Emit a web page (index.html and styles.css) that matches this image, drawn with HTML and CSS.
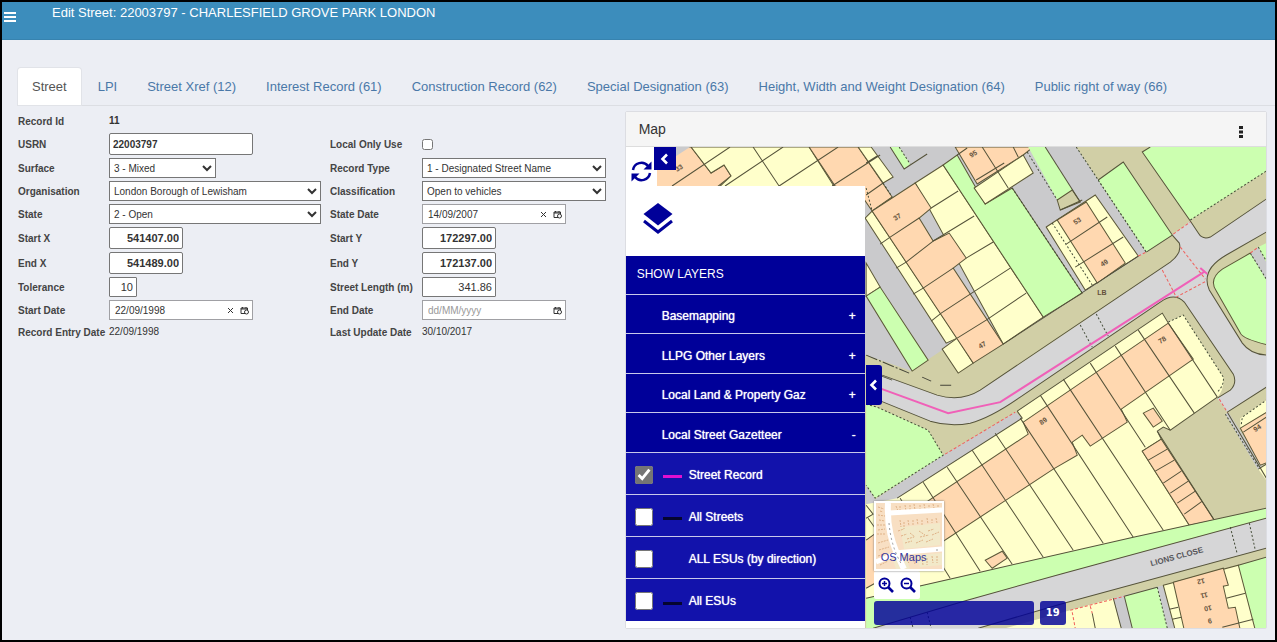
FILE: index.html
```html
<!DOCTYPE html>
<html lang="en">
<head>
<meta charset="utf-8">
<title>Edit Street</title>
<link rel="stylesheet" href="styles.css">
</head>
<body>
<div class="app">
  <header class="topbar">
    <button class="menu-btn" aria-label="Menu"><svg width="12" height="10" viewBox="0 0 12 10"><path d="M0 1h12M0 5h12M0 9h12" stroke="#fff" stroke-width="2"/></svg></button>
    <h1 class="title">Edit Street: 22003797 - CHARLESFIELD GROVE PARK LONDON</h1>
  </header>

  <nav class="tabs">
    <a class="tab active" href="#">Street</a>
    <a class="tab" href="#">LPI</a>
    <a class="tab" href="#">Street Xref (12)</a>
    <a class="tab" href="#">Interest Record (61)</a>
    <a class="tab" href="#">Construction Record (62)</a>
    <a class="tab" href="#">Special Designation (63)</a>
    <a class="tab" href="#">Height, Width and Weight Designation (64)</a>
    <a class="tab" href="#">Public right of way (66)</a>
  </nav>

  <main class="content">
    <form class="record">
      <span class="label">Record Id</span><output class="value strong wide">11</output>

      <label class="label" for="usrn">USRN</label><input class="box tall w144 strong" id="usrn" value="22003797">
      <label class="label" for="local">Local Only Use</label><input class="tick" type="checkbox" id="local">

      <label class="label" for="surface">Surface</label><select class="box w107" id="surface"><option>3 - Mixed</option></select>
      <label class="label" for="rtype">Record Type</label><select class="box w184" id="rtype"><option>1 - Designated Street Name</option></select>

      <label class="label" for="org">Organisation</label><select class="box w212" id="org"><option>London Borough of Lewisham</option></select>
      <label class="label" for="class">Classification</label><select class="box w184" id="class"><option>Open to vehicles</option></select>

      <label class="label" for="state">State</label><select class="box w212" id="state"><option>2 - Open</option></select>
      <label class="label" for="sdate">State Date</label>
      <div class="date"><input id="sdate" value="14/09/2007"><button type="button" aria-label="Clear"><svg class="ic" viewBox="0 0 9 9"><path d="M2 2l5 5M7 2l-5 5"/></svg></button><button type="button" aria-label="Pick date"><svg class="ic" viewBox="0 0 9 9"><path d="M5 7.500H1V2h6.500v2M1 3h6.500M2.500 1v1.500M6 1v1.500"/><circle cx="6.500" cy="6" r="2"/></svg></button></div>

      <label class="label" for="sx">Start X</label><input class="box tall w74 num strong" id="sx" value="541407.00">
      <label class="label" for="sy">Start Y</label><input class="box tall w74 num strong" id="sy" value="172297.00">

      <label class="label" for="ex">End X</label><input class="box tall w74 num strong" id="ex" value="541489.00">
      <label class="label" for="ey">End Y</label><input class="box tall w74 num strong" id="ey" value="172137.00">

      <label class="label" for="tol">Tolerance</label><input class="box w28 num" id="tol" value="10">
      <label class="label" for="len">Street Length (m)</label><input class="box w74 num" id="len" value="341.86">

      <label class="label" for="start">Start Date</label>
      <div class="date"><input id="start" value="22/09/1998"><button type="button" aria-label="Clear"><svg class="ic" viewBox="0 0 9 9"><path d="M2 2l5 5M7 2l-5 5"/></svg></button><button type="button" aria-label="Pick date"><svg class="ic" viewBox="0 0 9 9"><path d="M5 7.500H1V2h6.500v2M1 3h6.500M2.500 1v1.500M6 1v1.500"/><circle cx="6.500" cy="6" r="2"/></svg></button></div>
      <label class="label" for="end">End Date</label>
      <div class="date"><input id="end" placeholder="dd/MM/yyyy"><button type="button" aria-label="Pick date"><svg class="ic" viewBox="0 0 9 9"><path d="M5 7.500H1V2h6.500v2M1 3h6.500M2.500 1v1.500M6 1v1.500"/><circle cx="6.500" cy="6" r="2"/></svg></button></div>

      <span class="label">Record Entry Date</span><output class="value">22/09/1998</output>
      <span class="label">Last Update Date</span><output class="value">30/10/2017</output>
    </form>

    <section class="panel">
      <header class="panel-head">
        <h2>Map</h2>
        <button class="more" aria-label="More"><svg width="4" height="12" viewBox="0 0 4 12"><path d="M0 0h4v3H0zM0 4.500h4v3H0zM0 9h4v3H0z" fill="#222"/></svg></button>
      </header>
      <div class="map">
        <svg class="map-art" viewBox="626 147 640 481" preserveAspectRatio="xMinYMin slice">
          <rect class="olive" x="626" y="147" width="640" height="481"/>
          <path class="gray" d="M626 147H1076L1146 252L958 373L942 350L911 371L866 355H626z"/>
          <!-- main road and junction -->
          <path class="road" d="M866 366L882 375L937 395Q961 402 980 390L1060 337L1170 262Q1182 253 1179 243L1172 235L1190 221L1198 233Q1202 240 1210 237L1266 199V232L1226 255Q1200 270 1209 290L1242 343Q1250 354 1266 355V387L1227 412L1217 398L1230 390Q1237 383 1233 374L1184 302Q1174 292 1160 302L1020 397Q990 418 970 423Q950 427 930 421L866 395z"/>
          <g class="ln"><path d="M882 375L937 395Q961 402 980 390L1170 262Q1182 253 1179 243L1172 235M1190 221L1198 233Q1202 240 1210 237L1266 199M1266 232L1226 255Q1200 270 1209 290L1242 343Q1250 354 1266 355M1266 387L1227 412M1217 398L1230 390Q1237 383 1233 374L1184 302Q1174 292 1160 302L1020 397Q990 418 970 423Q950 427 930 421L866 395M866 370L892 380"/></g>
          <!-- north west -->
          <path class="orange ol" d="M626 147H691L711 173L724 165L731 176L717 187V200H626z"/>
          <path class="gray" d="M670 147H690L670 160z"/>
          <path class="yellow ol" d="M691 147H809L835 188H718L731 176L724 165L711 173z"/>
          <path class="orange ol" d="M809 147H858L892 197L872 211L861 195L835 186z"/>
          <path class="yellow ol" d="M858 147H871L893 177L883 183zM865 218L872 211L957 338L946 343zM866 263L880 287L866 296z"/>
          <path class="green ol" d="M866 296L880 287L928 360L912 371z"/>
          <path class="green" d="M890 147H899L910 164L904 169z"/>
          <path class="ln" d="M890 147L904 169L927 154M730 147L672 186M753 147L779 186M783 147L725 186M838 147L779 186M880 155L832 186M866 163L877 156M866 195L883 183"/>
          <path class="dot" d="M899 147L910 164M883 183L892 197M866 188L872 211"/>
          <path class="dash" d="M866 355L909 373M922 377L931 381M940 385H951"/>
          <!-- 37 to 47 -->
          <path class="yellow ol" d="M957 338L942 349L958 373L973 363z"/>
          <path class="yellow ol" d="M915 183L943 165L1043 317L1003 344z"/>
          <path class="orange ol" d="M872 211L915 183L931 208L919 218L933 241L949 233L966 258L953 268L1003 344L973 363z"/>
          <path class="green ol" d="M943 165L957 155L985 204L1012 188L1082 293L1043 317z"/>
          <path class="ln" d="M890 237L919 218M906 262L933 241M923 288L953 268M941 313L970 294M957 338L986 320M880 244L890 237M896 268L906 262M913 294L923 288M931 321L941 313M931 208L958 191M933 241L974 216M966 258L993 242M970 294L1010 268M986 320L1026 293"/>
          <path class="orange ol" d="M955 147H1033L1023 155L977 184z"/>
          <path class="yellow ol" d="M974 188L1023 155L1033 173L985 204z"/>
          <path class="ln" d="M982 147L1008 188M1013 147L1018 157M976 180L1004 163M957 155L967 148"/>
          <path class="green" d="M1028 147H1045L1072 190L1057 200z"/>
          <path class="olive ol" d="M1057 200L1072 190L1080 202L1060 210z"/>
          <path class="ln" d="M1045 147L1080 202"/>
          <path class="dot" d="M1027 152L1057 200M1012 188L1082 293M1076 147L1146 252"/>
          <!-- 49 to 53 -->
          <path class="yellow ol" d="M1046 227L1095 195L1138 256L1085 290z"/>
          <path class="orange ol" d="M1057 220L1086 202L1125 263L1097 283z"/>
          <path class="ln" d="M1066 244L1107 217M1075 267L1123 237M1060 210L1082 200"/>
          <path class="dot" d="M1052 223L1092 285"/>
          <path class="green" d="M1098 180L1123 162L1172 235L1146 252z"/>
          <path class="ln" d="M1098 180L1123 162L1172 235L1146 252M1138 256L1003 344"/>
          <path class="dot" d="M1098 180L1146 252"/>
          <!-- north east -->
          <path class="green" d="M1142 152L1150 147H1266V171L1190 220z"/>
          <path class="ln" d="M1150 147L1142 152L1190 221"/>
          <path class="dot" d="M1190 220L1266 171"/>
          <path class="green ol" d="M1250 253L1222 269Q1208 279 1216 291L1240 333Q1243 339 1268 345V279z"/>
          <path class="gray" d="M1250 253L1258 247L1266 262V280z"/>
          <path class="green" d="M1258 247L1266 243V262z"/>
          <path class="dot" d="M1250 253L1266 279M1258 247L1266 261"/>
          <!-- west green and lane -->
          <path class="gray" d="M866 484L875 499L943 455L1015 412L1022 418L897 499L878 560H866z"/>
          <path class="green" d="M866 404L877 407L928 430L943 455L875 498L866 485z"/>
          <path class="dot" d="M866 404L877 407L928 430L943 455L875 498L866 485"/>
          <!-- south terraces -->
          <path class="yellow" d="M866 504L897 498L1022 418L1017 411L1162 313L1168 322L1183 315L1223 377Q1224 390 1217 397L1170 430L1163 427L1157 431L1161 439L1142 451L1189 525L980 572L866 598z"/>
          <path class="orange" d="M866 540L890 520L905 516V566L866 588z"/>
          <path class="ln" d="M866 505L873 514L866 518M868 518L880 535M866 540L880 530M866 588L905 566M1017 411L1162 313L1168 323M897 498L1022 418L1017 411M1217 397L1170 430L1163 427L1157 431L1161 439L1142 451L1189 525"/>
          <path class="orange ol" d="M905 516L1028 434L1023 422L1168 323L1193 359L1121 409L1127 422L1090 446L1082 435L1072 442L1077 455L1053 469L905 566z"/>
          <path class="ln" d="M900 498L950 578M923 482L980 571M947 467L1012 564M972 450L1043 557M995 433L1073 550M1020 418L1103 543M1040 395L1133 537M1063 379L1163 530M1090 363L1145 447M1115 346L1170 430M1138 330L1194 413M1168 323L1217 397"/>
          <path class="dot" d="M1168 322L1183 315L1223 377Q1224 385 1217 392"/>
          <path class="orange ol" d="M1143 413L1153 408L1162 421L1153 427zM985 560L1002 551L1007 558L992 568zM1142 451L1161 439L1214 520L1189 525z"/>
          <path class="ln" d="M1148 460L1167 449M1155 471L1174 460M1163 483L1181 471M1170 493L1188 481M1177 503L1195 491M1184 514L1202 501M1157 431L1214 520"/>
          <path class="gray" d="M1225 414L1228 412L1262 465L1258 470z"/>
          <path class="yellow" d="M1240 418L1266 400V412L1240 428zM1258 469L1266 464V480z"/>
          <path class="orange ol" d="M1240 428L1268 411V462L1260 465z"/>
          <path class="ln" d="M1227 412L1266 478M1243 432L1266 417M1258 469L1266 464"/>
          <path class="dot" d="M1225 414L1258 467M1241 424L1242 417L1266 400"/>
          <!-- Lions Close -->
          <path class="green" d="M866 598L980 572L1133 537L1266 508V518L1060 574L967 600L873 628H866z"/>
          <path class="road" d="M1266 518V548L1060 604L978 628H873L967 600L1060 574z"/>
          <path class="ln" d="M866 598L980 572L1133 537L1266 508M1266 518L1060 574L967 600L873 628M1266 548L1060 604L978 628"/>
          <path class="dot" d="M1230 527L1237 554M1249 523L1255 550M910 617L913 628M927 612L931 628"/>
          <path class="yellow" d="M1005 628L1070 610L1113 598L1121 628z"/>
          <path class="gray" d="M1113 598L1163 585L1175 628H1121z"/>
          <path class="green" d="M1124 596L1157 587L1167 628H1132zM1238 565L1266 557V628H1255z"/>
          <path class="yellow ol" d="M1163 585L1238 565L1255 630H1175z"/>
          <path class="orange ol" d="M1173 582L1223 568L1228 585L1223 586L1228 608L1235 607L1240 630H1184z"/>
          <path class="ln" d="M1226 598L1245 593M1222 627L1253 619M1169 609L1178 607M1172 619L1181 617M1113 598L1121 628M1124 596L1132 628M1124 596L1157 587M1238 565L1266 557M1092 613L1095 628"/>
          <path class="dot" d="M1157 587L1167 628"/>
          <path class="reddot" d="M945 454L1015 412M1173 234L1190 222M1180 247L1205 279M1162 270L1176 297L1206 281M1138 256L1146 252M1219 399L1227 412M1070 610L1124 596M1072 612L1075 628M1090 606L1092 613M1250 253L1258 247"/>
          <path class="dot" d="M1080 325L1092 347M1096 314L1108 336"/>
          <path class="route" d="M866 384L882 389L948 413L1000 402L1205 271M1200 268L1207 274"/>
          <g class="no">
            <text transform="translate(895 221) rotate(-33)">37</text>
            <text transform="translate(980 349) rotate(-33)">47</text>
            <text transform="translate(971 158) rotate(-33)">95</text>
            <text transform="translate(677 172) rotate(-33)">33</text>
            <text transform="translate(1075 225) rotate(-33)">53</text>
            <text transform="translate(1102 267) rotate(-33)">49</text>
            <text transform="translate(1097 295)">LB</text>
            <text transform="translate(1160 344) rotate(-33)">78</text>
            <text transform="translate(1041 425) rotate(-33)">89</text>
            <text transform="translate(1255 432) rotate(-33)">94</text>
            <text transform="translate(1204 578) rotate(168)">12</text>
            <text transform="translate(1207 592) rotate(168)">11</text>
            <text transform="translate(1211 605) rotate(168)">10</text>
            <text transform="translate(1211 618) rotate(168)">9</text>
          </g>
          <text class="street" transform="translate(1151 566) rotate(-15)">LIONS CLOSE</text>
        </svg>

        <aside class="side">
          <div class="tools">
            <button class="refresh" aria-label="Refresh"><svg width="21" height="23" viewBox="0 0 21 23" fill="none" stroke="#009" stroke-width="2.500"><path d="M2 10A8.500 8.500 0 0 1 17 6"/><path d="M19 13A8.500 8.500 0 0 1 4 17"/><path d="M20.500 1.500v8h-8zM0.500 21.500v-8h8z" fill="#009" stroke="none"/></svg></button>
            <button class="collapse" aria-label="Collapse"><svg width="9" height="12" viewBox="0 0 9 12"><path d="M7 1.500L2.500 6L7 10.500" fill="none" stroke="#fff" stroke-width="2.600"/></svg></button>
          </div>
          <div class="layers-icon"><svg width="30" height="32" viewBox="0 0 30 32"><path d="M15 0L29.500 11L15 22.500L0.500 11z" fill="#009"/><path d="M1 18L15 29L29 18" fill="none" stroke="#009" stroke-width="3"/></svg></div>
          <h3 class="side-title">SHOW LAYERS</h3>
          <button class="group"><span>Basemapping</span><span>+</span></button>
          <button class="group"><span>LLPG Other Layers</span><span>+</span></button>
          <button class="group"><span>Local Land &amp; Property Gaz</span><span>+</span></button>
          <button class="group"><span>Local Street Gazetteer</span><span>-</span></button>
          <label class="layer"><input type="checkbox" checked><i class="key pink"></i><span>Street Record</span></label>
          <label class="layer"><input type="checkbox"><i class="key dark"></i><span>All Streets</span></label>
          <label class="layer"><input type="checkbox"><i class="key"></i><span>ALL ESUs (by direction)</span></label>
          <label class="layer"><input type="checkbox"><i class="key dark"></i><span>All ESUs</span></label>
          <div class="side-foot"></div>
        </aside>
        <button class="drawer" aria-label="Hide layers"><svg width="9" height="12" viewBox="0 0 9 12"><path d="M7 1.500L2.500 6L7 10.500" fill="none" stroke="#fff" stroke-width="2.600"/></svg></button>

        <div class="controls">
          <button class="thumb">
            <svg viewBox="0 0 66 66" preserveAspectRatio="none">
              <rect width="66" height="66" fill="#f8dfc3"/>
              <path d="M24 24L64 20V42L28 46zM16 54L30 52L34 66H20zM40 52L66 50V62L44 64z" fill="#f2e9c9"/>
              <path d="M2 4L8 6M2 12L9 13M1 22L9 22M1 31L10 31M2 40L12 37M3 47L13 44M20 3L22 8M29 2L30 8M38 1L39 7M48 1L49 6M57 1L58 5M24 17L25 24M32 17L33 23M41 16L42 22M51 15L52 21M60 15L61 20M25 33L31 31M34 30L39 34M43 28L49 32M52 28L58 26M29 40L36 38M40 40L47 37M50 39L57 36M28 54L33 60M46 54L47 62M56 53L57 60M4 8L7 9M3 17L9 18M2 27L9 26M24 3V8M34 2V7M44 2V7M53 2V6M62 2V6M28 19V26M37 17V23M46 17V22M56 16V20M22 28L28 26M31 36L38 34M44 34L53 32M56 32L63 29M36 54L39 61M51 55V62M61 53V60M2 53L8 51M4 62L12 58" stroke="#dfb287" stroke-width="1" stroke-dasharray="2 1"/>
              <path d="M12 0C11 22 14 38 28 66" fill="none" stroke="#fff" stroke-width="6"/>
              <path d="M13 10L66 7M18 50L66 46M0 59L22 50" fill="none" stroke="#fff" stroke-width="5"/>
              <path d="M13 20Q15 44 26 62M60 47H65" fill="none" stroke="#999" stroke-dasharray="2 3"/>
            </svg>
            <span>OS Maps</span>
          </button>
          <div class="zoom">
            <button aria-label="Zoom in"><svg width="16" height="16" viewBox="0 0 16 16" fill="none" stroke="#009"><circle cx="6.500" cy="6.500" r="5" stroke-width="2"/><path d="M10 10l5 5" stroke-width="2.600"/><path d="M4 6.500h5M6.500 4v5" stroke-width="1.500"/></svg></button>
            <button aria-label="Zoom out"><svg width="16" height="16" viewBox="0 0 16 16" fill="none" stroke="#009"><circle cx="6.500" cy="6.500" r="5" stroke-width="2"/><path d="M10 10l5 5" stroke-width="2.600"/><path d="M4 6.500h5" stroke-width="1.500"/></svg></button>
          </div>
          <div class="scale"><div class="bar"></div><div class="level">19</div></div>
        </div>
      </div>
    </section>
  </main>
</div>
</body>
</html>
```
FILE: styles.css
```css
* { box-sizing: border-box; }

body {
  margin: 0;
  font-family: "Liberation Sans", Arial, sans-serif;
  font-size: 13px;
  color: #333;
}

button { border: 0; padding: 0; background: none; font: inherit; display: block; }
h1, h2, h3 { margin: 0; font-weight: normal; }
svg { display: block; }

.app {
  min-height: 100vh;
  display: flex;
  flex-direction: column;
  border: 2px solid #000;
  background: #eceef4;
}

.topbar {
  display: flex;
  align-items: flex-start;
  gap: 36px;
  height: 38px;
  padding: 2px 2px;
  background: #3c8dbc;
  border-bottom: 1px solid #3783af;
}
.menu-btn { margin-top: 8px; }
.title { font-size: 13px; line-height: 17px; color: #fff; }

.tabs {
  display: flex;
  gap: 2px;
  margin: 28px 0 0 16px;
  border-bottom: 1px solid #dcdee3;
}
.tab {
  padding: 0 14px;
  line-height: 37px;
  font-size: 13px;
  color: #4a78a8;
  text-decoration: none;
}
.tab.active {
  margin-right: 1px;
  color: #555;
  background: #fff;
  border-radius: 3px 3px 0 0;
  box-shadow: 0 0 0 1px #e1e3e8;
}

.content {
  flex: 1;
  display: grid;
  grid-template-columns: minmax(590px, 17fr) 18fr;
  padding: 5px 8px 11px 16px;
}

.record {
  display: grid;
  grid-template-columns: 91px 221px 92px 1fr;
  gap: 3px 0;
  align-content: start;
  align-items: center;
  padding-top: 1px;
  font-size: 11px;
}
.label { font-size: 10px; font-weight: bold; color: #444; white-space: nowrap; }
.value { font-size: 10px; line-height: 18px; }
.wide { grid-column: span 3; }

.box {
  height: 20px;
  margin: 0;
  padding: 0 3px;
  border: 1px solid #767676;
  border-radius: 1px;
  background: #fff;
  color: #333;
  font-family: inherit;
  font-size: 10px;
}
select.box { padding: 0; border-radius: 0; }
.tall { height: 22px; border-radius: 2px; }
.strong { font-weight: bold; }
.num { text-align: right; font-size: 11px; }
.w28 { width: 28px; }
.w74 { width: 74px; }
.w107 { width: 107px; }
.w144 { width: 144px; }
.w184 { width: 184px; }
.w212 { width: 212px; }
.tick { width: 11px; height: 11px; margin: 0; }

.date {
  display: flex;
  align-items: center;
  gap: 5px;
  width: 144px;
  height: 20px;
  padding: 0 3px 0 5px;
  border: 1px solid #a0a0a4;
  background: #fff;
}
.date input {
  flex: 1;
  min-width: 0;
  padding: 0;
  border: 0;
  background: none;
  color: #333;
  font-family: inherit;
  font-size: 10px;
}
.date input::placeholder { color: #999; }
.ic { width: 9px; height: 9px; fill: none; stroke: #333; stroke-width: 1; }

.panel {
  display: flex;
  flex-direction: column;
  border: 1px solid #dcdde2;
  border-radius: 2px;
  background: #fff;
}
.panel-head {
  display: flex;
  align-items: center;
  justify-content: space-between;
  height: 35px;
  padding: 0 23px 0 13px;
  background: #f5f5f5;
  border-bottom: 1px solid #ddd;
}
.panel-head h2 { font-size: 14px; color: #333; }
.more { padding-top: 6px; }

.map { position: relative; flex: 1; overflow: hidden; }
.map-art { position: absolute; left: 0; top: 0; width: 100%; height: 100%; }
.olive { fill: #d1cfa6; }
.gray { fill: #cacacc; }
.road { fill: #d6d6d7; }
.orange { fill: #ffd8b0; }
.yellow { fill: #ffffcb; }
.green { fill: #ccffb0; }
.ol { stroke: #5c5838; stroke-width: 1; }
.ln { fill: none; stroke: #55533a; stroke-width: 1; }
.dot { fill: none; stroke: #444c38; stroke-width: 1; stroke-dasharray: 2 2; }
.dash { fill: none; stroke: #444438; stroke-width: 1; stroke-dasharray: 12 2 2 2; }
.reddot { fill: none; stroke: #f0605c; stroke-width: 1; stroke-dasharray: 3 2; }
.route { fill: none; stroke: #f060b8; stroke-width: 2; }
.no { font-size: 7px; font-weight: bold; fill: #65523c; }
.street { font-size: 8px; font-weight: bold; fill: #55555a; }

.side { position: relative; width: 239px; color: #fff; }
.tools { display: flex; align-items: flex-start; height: 39px; }
.refresh { width: 31px; height: 39px; padding: 9px 0 0 5px; background: #fff; }
.collapse {
  display: grid;
  place-items: center;
  width: 22px;
  height: 23px;
  margin-left: -3px;
  background: #009;
}
.layers-icon { height: 70px; padding: 17px; background: #fff; }
.side-title {
  height: 39px;
  padding-left: 11px;
  font-size: 12px;
  line-height: 37px;
  background: #009;
  border-bottom: 1px solid #c8c8ea;
}
.group {
  display: flex;
  justify-content: space-between;
  align-items: center;
  width: 100%;
  height: 39px;
  padding: 4px 9px 0 36px;
  font-size: 12px;
  color: #fff;
  text-shadow: 0 0 1px #fff;
  background: #009;
  border-bottom: 1px solid #c8c8ea;
}
.layer {
  display: flex;
  align-items: center;
  height: 42px;
  padding: 2px 0 0 9px;
  font-size: 12px;
  color: #fff;
  text-shadow: 0 0 1px #fff;
  background: #1212ab;
  border-bottom: 1px solid #c8c8ea;
}
.layer:last-of-type { border-bottom: 0; }
.group:nth-of-type(even) { height: 40px; }
.layer input { width: 18px; height: 18px; margin: 0 10px 0 0; accent-color: #757575; }
.key { width: 19px; height: 3px; margin: 4px 7px 0 0; }
.pink { background: #e010d0; }
.dark { background: #050530; }
.side-foot { height: 7px; background: #fff; }

.drawer {
  position: absolute;
  left: 240px;
  top: 218px;
  display: grid;
  place-items: center;
  width: 16px;
  height: 40px;
  border-radius: 0 3px 3px 0;
  background: #009;
}

.controls { position: absolute; left: 248px; bottom: 3px; }
.thumb {
  position: relative;
  width: 70px;
  height: 70px;
  border: 2px solid #fff;
  box-shadow: 0 0 2px #777;
}
.thumb svg { width: 100%; height: 100%; }
.thumb span { position: absolute; left: 5px; bottom: 6px; font-size: 11px; color: #33339c; }
.zoom {
  display: flex;
  gap: 6px;
  width: 46px;
  padding: 6px 4px;
  margin-bottom: 2px;
  background: #fff;
  border-radius: 2px;
}
.scale { display: flex; gap: 6px; }
.bar { width: 160px; height: 24px; border-radius: 3px; background: rgba(0, 0, 153, .82); }
.level {
  width: 26px;
  border-radius: 3px;
  background: rgba(0, 0, 153, .82);
  color: #fff;
  font: bold 10px/24px "DejaVu Sans", sans-serif;
  text-align: center;
}
```
